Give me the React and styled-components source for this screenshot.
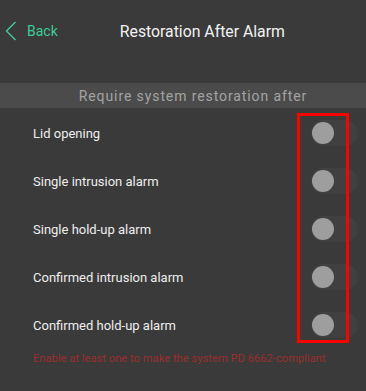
import React from "react";
import styled, { createGlobalStyle } from "styled-components";

const GlobalStyle = createGlobalStyle`
    html, body {
        margin: 0;
        padding: 0;
        background-color: #3a3a3a;
    }
    body {
        font-family: Roboto, "Liberation Sans", sans-serif;
    }
`;

const Page = styled.div`
    position: relative;
    width: 366px;
    height: 391px;
    background-color: #3a3a3a;
    overflow: hidden;
`;

const Header = styled.div`
    display: flex;
    flex-direction: row;
    align-items: center;
    height: 62px;
    padding-left: 5px;
`;

const BackButton = styled.div`
    display: flex;
    flex-direction: row;
    align-items: center;
    gap: 10px;
    color: #3fcb98;
    font-size: 14px;
    cursor: pointer;
`;

const Title = styled.div`
    margin-left: 62px;
    color: #f2f2f2;
    font-size: 15.8px;
`;

const SectionBand = styled.div`
    margin-top: 21px;
    height: 25px;
    background-color: #4b4b4b;
    color: #a3a3a3;
    font-size: 14px;
    letter-spacing: 0.9px;
    display: flex;
    align-items: center;
    justify-content: center;
    padding-left: 20px;
`;

const List = styled.div`
    display: flex;
    flex-direction: column;
    padding-top: 1px;
`;

const Row = styled.div`
    display: flex;
    flex-direction: row;
    align-items: center;
    justify-content: space-between;
    height: 48px;
    padding: 0 8px 0 33px;
`;

const Label = styled.span`
    color: #eeeeee;
    font-size: 13px;
`;

const Track = styled.div`
    width: 47px;
    height: 26px;
    border-radius: 13px;
    background-color: #404040;
    display: flex;
    align-items: center;
    padding-left: 1px;
    box-sizing: border-box;
`;

const Knob = styled.div`
    width: 22px;
    height: 22px;
    border-radius: 50%;
    background-color: #9e9e9e;
`;

const Hint = styled.div`
    padding-left: 33px;
    margin-top: 1px;
    color: #9a2e2e;
    font-size: 11.2px;
    line-height: 18px;
`;

const Highlight = styled.div`
    position: absolute;
    left: 297px;
    top: 113px;
    width: 52px;
    height: 230px;
    border: 3px solid #ff0000;
    box-sizing: border-box;
    pointer-events: none;
`;

const items = [
    "Lid opening",
    "Single intrusion alarm",
    "Single hold-up alarm",
    "Confirmed intrusion alarm",
    "Confirmed hold-up alarm",
];

const Chevron = () => (
    <svg width="12" height="20" viewBox="0 0 12 20" fill="none">
        <path d="M10.5 1 L1.5 10 L10.5 19" stroke="#3fcb98" strokeWidth="1.4" />
    </svg>
);

const App = () => {
    return (
        <Page>
            <GlobalStyle />
            <Header>
                <BackButton>
                    <Chevron />
                    Back
                </BackButton>
                <Title>Restoration After Alarm</Title>
            </Header>
            <SectionBand>Require system restoration after</SectionBand>
            <List>
                {items.map((item) => (
                    <Row key={item}>
                        <Label>{item}</Label>
                        <Track>
                            <Knob />
                        </Track>
                    </Row>
                ))}
            </List>
            <Hint>Enable at least one to make the system PD 6662-compliant</Hint>
            <Highlight />
        </Page>
    );
};

export default App;
